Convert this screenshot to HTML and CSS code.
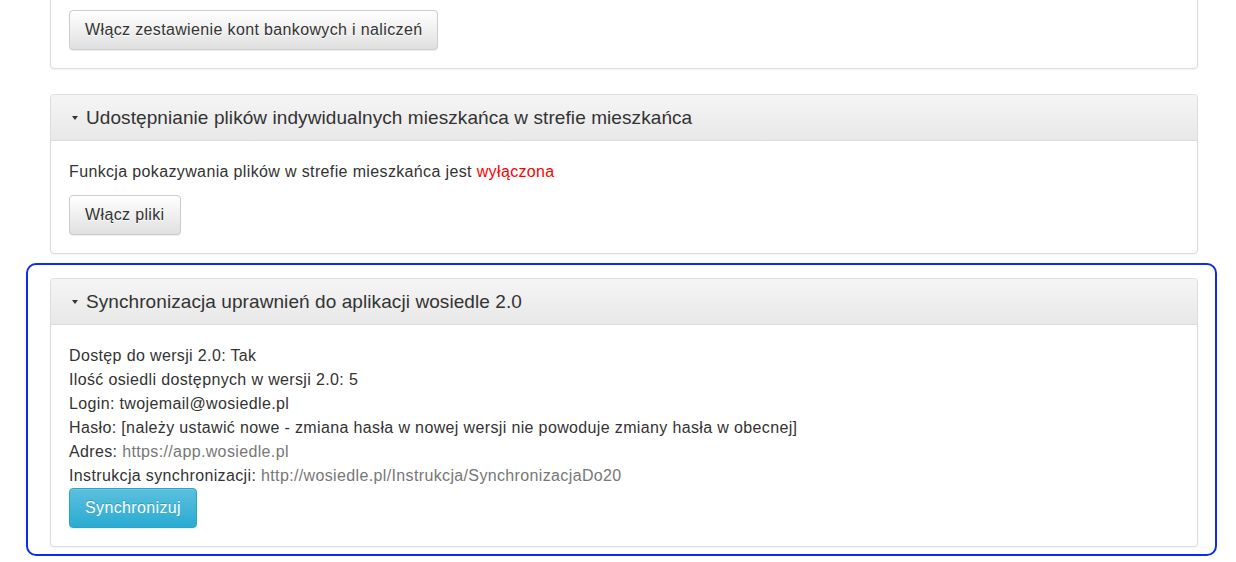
FILE: index.html
```html
<!DOCTYPE html>
<html lang="pl">
<head>
<meta charset="utf-8">
<title>Ustawienia</title>
<link rel="stylesheet" href="styles.css">
</head>
<body>
<div class="page">
  <div class="panel panel-first">
    <div class="panel-body">
      <button class="btn btn-default">Włącz zestawienie kont bankowych i naliczeń</button>
    </div>
  </div>

  <div class="panel">
    <div class="panel-heading"><span class="caret"></span>Udostępnianie plików indywidualnych mieszkańca w strefie mieszkańca</div>
    <div class="panel-body">
      <p class="info">Funkcja pokazywania plików w strefie mieszkańca jest <span class="off">wyłączona</span></p>
      <button class="btn btn-default">Włącz pliki</button>
    </div>
  </div>

  <div class="highlight">
    <div class="panel panel-last">
      <div class="panel-heading"><span class="caret"></span>Synchronizacja uprawnień do aplikacji wosiedle 2.0</div>
      <div class="panel-body">
        <div class="line">Dostęp do wersji 2.0: Tak</div>
        <div class="line">Ilość osiedli dostępnych w wersji 2.0: 5</div>
        <div class="line">Login: twojemail@wosiedle.pl</div>
        <div class="line">Hasło: [należy ustawić nowe - zmiana hasła w nowej wersji nie powoduje zmiany hasła w obecnej]</div>
        <div class="line">Adres: <a class="link" href="#">https://app.wosiedle.pl</a></div>
        <div class="line">Instrukcja synchronizacji: <a class="link" href="#">http://wosiedle.pl/Instrukcja/SynchronizacjaDo20</a></div>
        <button class="btn btn-info">Synchronizuj</button>
      </div>
    </div>
  </div>
</div>
</body>
</html>
```

FILE: styles.css
```css
* { box-sizing: border-box; }
html, body {
  margin: 0;
  padding: 0;
  background: #fff;
}
body {
  font-family: "Liberation Sans", Arial, sans-serif;
  font-size: 16px;
  line-height: 24px;
  letter-spacing: 0.36px;
  color: #333;
  overflow: hidden;
}
.page {
  width: 1148px;
  margin-left: 50px;
  margin-top: -10px;
}
.panel {
  background: #fff;
  border: 1px solid #ddd;
  border-radius: 4px;
  box-shadow: 0 1px 2px rgba(0,0,0,.05);
  margin-bottom: 25px;
}
.panel-heading {
  height: 46px;
  padding: 10px 19px 10px 21px;
  font-size: 19px;
  line-height: 25px;
  letter-spacing: 0.08px;
  color: #333;
  background-image: linear-gradient(to bottom, #f5f5f5 0, #e8e8e8 100%);
  border-bottom: 1px solid #ddd;
  border-radius: 3px 3px 0 0;
  display: flex;
  align-items: center;
}
.caret {
  display: inline-block;
  width: 0;
  height: 0;
  border-top: 4px solid #333;
  border-left: 3.5px solid transparent;
  border-right: 3.5px solid transparent;
  margin-right: 8px;
  margin-top: 1px;
}
.panel-body {
  padding: 19px 18px 18px 18px;
}
.info {
  margin: 0 0 11px 0;
}
.off { color: #f00; }
.link {
  color: #777;
  text-decoration: none;
}
.btn {
  display: inline-block;
  font-family: inherit;
  font-size: 16px;
  line-height: 24px;
  letter-spacing: 0.36px;
  height: 40px;
  padding: 7px 15px;
  border-radius: 4px;
  border: 1px solid #ccc;
  cursor: pointer;
}
.btn-default {
  color: #333;
  background-image: linear-gradient(to bottom, #fff 0, #e0e0e0 100%);
  border-color: #ccc;
  text-shadow: 0 1px 0 #fff;
  box-shadow: inset 0 1px 0 rgba(255,255,255,.15), 0 1px 1px rgba(0,0,0,.075);
}
.btn-info {
  color: #fff;
  background-image: linear-gradient(to bottom, #5bc0de 0, #2aabd2 100%);
  border-color: #28a4c9;
  text-shadow: 0 -1px 0 rgba(0,0,0,.2);
  box-shadow: inset 0 1px 0 rgba(255,255,255,.15), 0 1px 1px rgba(0,0,0,.075);
}
.highlight {
  margin: -16px -19px 0 -24px;
  padding: 13px 17px 7px 22px;
  border: 2px solid #0a2cf5;
  border-radius: 10px;
}
.panel-last { margin-bottom: 0; }
```
